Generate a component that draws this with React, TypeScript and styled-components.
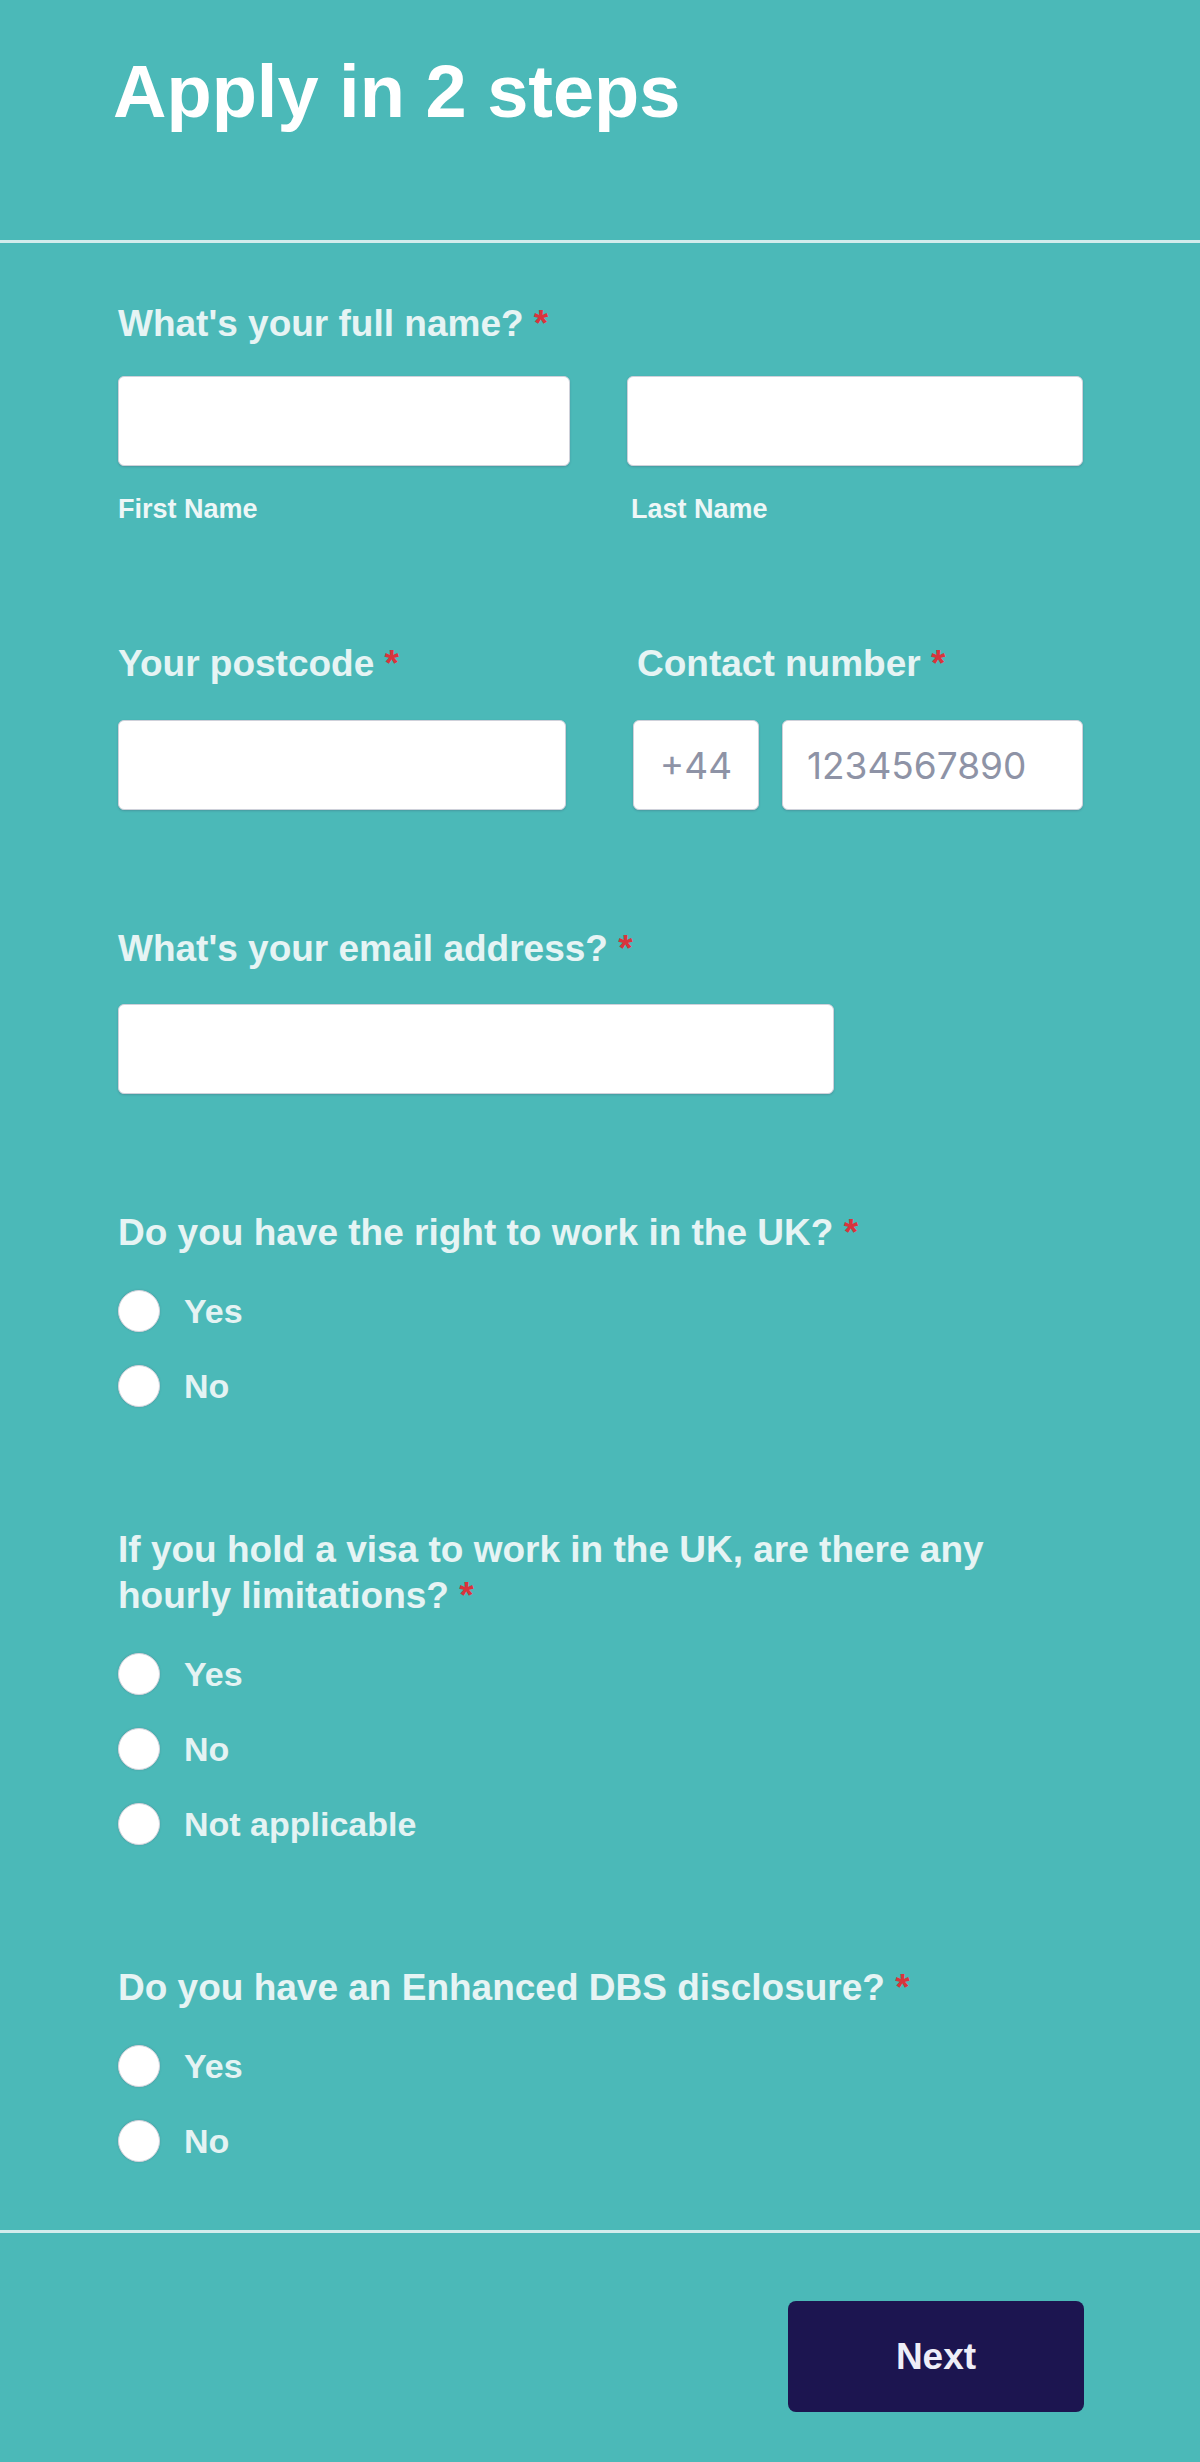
import React from "react";
import styled, { createGlobalStyle } from "styled-components";

const GlobalStyle = createGlobalStyle`
  html, body { margin: 0; padding: 0; background: #4bb9b8; }
  body { font-family: "Liberation Sans", Arial, sans-serif; }
  * { box-sizing: border-box; }
`;

const Page = styled.div`
  width: 1200px;
  min-height: 2462px;
  background: #4bb9b8;
  display: flex;
  flex-direction: column;
`;

const Header = styled.header`
  padding: 55px 0 111px 113px;
  border-bottom: 3px solid #d2ecec;
`;

const Title = styled.h1`
  margin: 0;
  font-family: "Liberation Sans", Arial, sans-serif;
  font-weight: 700;
  font-size: 74px;
  line-height: 74px;
  color: #ffffff;
`;

const Form = styled.form`
  display: flex;
  flex-direction: column;
  gap: 116px;
  padding: 58px 117px 64px 118px;
`;

const Field = styled.div`
  display: flex;
  flex-direction: column;
`;

const Question = styled.label<{ $mb?: number; $indent?: number }>`
  display: block;
  margin: 0 0 ${(p) => p.$mb ?? 33}px ${(p) => p.$indent ?? 0}px;
  max-width: 940px;
  font-family: "Liberation Sans", Arial, sans-serif;
  font-weight: 700;
  font-size: 37px;
  line-height: 46px;
  color: #e6f4f4;
`;

const Required = styled.span`
  color: #d9343c;
`;

const Columns = styled.div<{ $cols: string; $gap: number }>`
  display: grid;
  grid-template-columns: ${(p) => p.$cols};
  column-gap: ${(p) => p.$gap}px;
`;

const Column = styled.div`
  display: flex;
  flex-direction: column;
`;

const TextInput = styled.input<{ $width?: number; $center?: boolean }>`
  display: block;
  width: ${(p) => (p.$width ? `${p.$width}px` : "100%")};
  height: 90px;
  padding: 0 24px;
  margin: 0;
  border: 1px solid #cfd1da;
  border-radius: 6px;
  background: #ffffff;
  box-shadow: 0 1px 2px rgba(60, 60, 90, 0.25);
  font-family: Inter, "Liberation Sans", sans-serif;
  font-size: 37px;
  color: #3a3d4d;
  text-align: ${(p) => (p.$center ? "center" : "left")};
  outline: none;
  &::placeholder {
    color: #8e93a6;
  }
`;

const SubLabel = styled.span<{ $indent?: number }>`
  display: block;
  margin-top: 27px;
  padding-left: ${(p) => p.$indent ?? 0}px;
  font-family: "Liberation Sans", Arial, sans-serif;
  font-weight: 700;
  font-size: 27px;
  line-height: 32px;
  color: #eef7f7;
`;

const PhoneGroup = styled.div`
  display: grid;
  grid-template-columns: 126px 1fr;
  column-gap: 23px;
`;

const RadioList = styled.div`
  display: flex;
  flex-direction: column;
  gap: 31px;
  padding-bottom: 3px;
`;

const RadioRow = styled.label`
  display: flex;
  align-items: center;
  gap: 24px;
  height: 44px;
  cursor: pointer;
`;

const RadioCircle = styled.input`
  appearance: none;
  -webkit-appearance: none;
  margin: 0;
  width: 42px;
  height: 42px;
  border-radius: 50%;
  background: #ffffff;
  border: 1px solid #d6d6de;
  box-shadow: 0 0 2px rgba(80, 80, 100, 0.3);
  flex: none;
`;

const RadioText = styled.span`
  font-family: "Liberation Sans", Arial, sans-serif;
  font-weight: 700;
  font-size: 34px;
  line-height: 40px;
  color: #e4f3f3;
`;

const Footer = styled.footer`
  display: flex;
  justify-content: flex-end;
  border-top: 3px solid #d2ecec;
  padding: 68px 116px 50px 0;
`;

const NextButton = styled.button`
  width: 296px;
  height: 111px;
  border: none;
  border-radius: 8px;
  background: #1c1550;
  color: #eeeef8;
  font-family: "Liberation Sans", Arial, sans-serif;
  font-weight: 700;
  font-size: 37px;
  cursor: pointer;
`;

type RadioQuestionProps = {
  name: string;
  label: string;
  options: string[];
};

const RadioQuestion = ({ name, label, options }: RadioQuestionProps) => (
  <Field>
    <Question>
      {label} <Required>*</Required>
    </Question>
    <RadioList>
      {options.map((o) => (
        <RadioRow key={o}>
          <RadioCircle type="radio" name={name} value={o} />
          <RadioText>{o}</RadioText>
        </RadioRow>
      ))}
    </RadioList>
  </Field>
);

export default function App() {
  return (
    <Page>
      <GlobalStyle />
      <Header>
        <Title>Apply in 2 steps</Title>
      </Header>
      <Form onSubmit={(e) => e.preventDefault()}>
        <Field>
          <Question $mb={29}>
            What's your full name? <Required>*</Required>
          </Question>
          <Columns $cols="452px 456px" $gap={57}>
            <Column>
              <TextInput type="text" aria-label="First Name" />
              <SubLabel>First Name</SubLabel>
            </Column>
            <Column>
              <TextInput type="text" aria-label="Last Name" />
              <SubLabel $indent={4}>Last Name</SubLabel>
            </Column>
          </Columns>
        </Field>

        <Columns $cols="448px 1fr" $gap={67}>
          <Column>
            <Question>
              Your postcode <Required>*</Required>
            </Question>
            <TextInput type="text" aria-label="Your postcode" />
          </Column>
          <Column>
            <Question $indent={4}>
              Contact number <Required>*</Required>
            </Question>
            <PhoneGroup>
              <TextInput type="text" placeholder="+44" $center aria-label="Country code" />
              <TextInput type="tel" placeholder="1234567890" aria-label="Contact number" />
            </PhoneGroup>
          </Column>
        </Columns>

        <Field>
          <Question $mb={32}>
            What's your email address? <Required>*</Required>
          </Question>
          <TextInput type="email" $width={716} aria-label="Email address" />
        </Field>

        <RadioQuestion
          name="rightToWork"
          label="Do you have the right to work in the UK?"
          options={["Yes", "No"]}
        />
        <RadioQuestion
          name="visaLimits"
          label="If you hold a visa to work in the UK, are there any hourly limitations?"
          options={["Yes", "No", "Not applicable"]}
        />
        <RadioQuestion
          name="dbs"
          label="Do you have an Enhanced DBS disclosure?"
          options={["Yes", "No"]}
        />
      </Form>
      <Footer>
        <NextButton type="button">Next</NextButton>
      </Footer>
    </Page>
  );
}
